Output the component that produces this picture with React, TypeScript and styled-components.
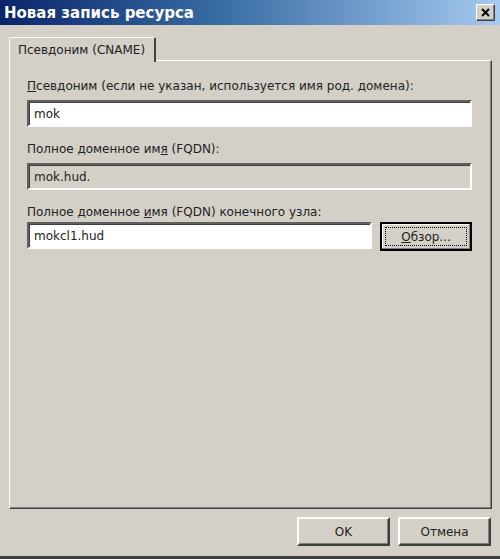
import React from "react";
import styled, { createGlobalStyle } from "styled-components";

const Global = createGlobalStyle`
  html, body { margin: 0; padding: 0; background: #d4d0c8; }
  body { font-family: "DejaVu Sans", "Liberation Sans", sans-serif; font-size: 12px; color: #000; }
`;

const Window = styled.div`
  width: 500px;
  height: 559px;
  box-sizing: border-box;
  background: #d4d0c8;
  display: flex;
  flex-direction: column;
  border-bottom: 3px solid #404040;
`;

const TitleBar = styled.div`
  height: 25px;
  flex: none;
  display: flex;
  align-items: center;
  justify-content: space-between;
  padding: 0 5px 0 4px;
  background: linear-gradient(to right, #0a246a 0%, #3a6ea5 45%, #a6caf0 100%);
`;

const Title = styled.span`
  color: #fff;
  font-weight: bold;
  font-size: 15px;
`;

const CloseButton = styled.div`
  width: 19px;
  height: 17px;
  box-sizing: border-box;
  background: #d4d0c8;
  border: 1px solid;
  border-color: #fff #404040 #404040 #fff;
  box-shadow: inset -1px -1px 0 #808080;
  display: flex;
  align-items: center;
  justify-content: center;
`;

const Body = styled.div`
  flex: 1;
  display: flex;
  flex-direction: column;
  padding: 12px 8px 0 9px;
  min-height: 0;
`;

const TabStrip = styled.div`
  display: flex;
  height: 23px;
  flex: none;
  position: relative;
  z-index: 1;
`;

const Tab = styled.div`
  box-sizing: border-box;
  width: 147px;
  height: 25px;
  padding: 0 0 0 8px;
  display: flex;
  align-items: center;
  background: #d4d0c8;
  border-top: 1px solid #fff;
  border-left: 1px solid #fff;
  border-right: 2px solid #404040;
  border-top-left-radius: 2px;
  border-top-right-radius: 2px;
  color: #222;
`;

const Panel = styled.div`
  flex: 1;
  box-sizing: border-box;
  border-top: 1px solid #fff;
  border-left: 1px solid #fff;
  border-right: 1px solid #404040;
  border-bottom: 1px solid #404040;
  box-shadow: inset -1px -1px 0 #808080;
  padding: 18px 19px 0 17px;
  display: flex;
  flex-direction: column;
`;

const Label = styled.div<{ $first?: boolean; $tight?: boolean }>`
  line-height: 14px;
  margin-top: ${(p) => (p.$first ? "0" : "15px")};
  margin-bottom: ${(p) => (p.$tight ? "3px" : "7px")};
  color: #222;
`;

const Key = styled.span`
  text-decoration: underline;
`;

const Input = styled.div<{ $disabled?: boolean; $width?: number }>`
  box-sizing: border-box;
  height: 27px;
  width: ${(p) => (p.$width ? `${p.$width}px` : "100%")};
  background: ${(p) => (p.$disabled ? "#d4d0c8" : "#fff")};
  border: 2px solid;
  border-color: #606060 #fff #fff #606060;
  box-shadow: inset 1px 1px 0 #404040, 1px 1px 0 #d4d0c8;
  display: flex;
  align-items: center;
  padding-left: 5px;
  color: #222;
`;

const Row = styled.div`
  display: flex;
  align-items: flex-start;
  gap: 8px;
`;

const Button = styled.div<{ $default?: boolean; $width?: number }>`
  box-sizing: border-box;
  width: ${(p) => p.$width ?? 93}px;
  height: 29px;
  background: #d4d0c8;
  display: flex;
  align-items: center;
  justify-content: center;
  position: relative;
  color: #222;
  border: 2px solid;
  border-color: ${(p) => (p.$default ? "#000" : "#fff #404040 #404040 #fff")};
  box-shadow: ${(p) =>
    p.$default ? "inset -1px -1px 0 #808080, inset 1px 1px 0 #fff" : "inset -1px -1px 0 #808080"};
`;

const Focus = styled.span`
  position: absolute;
  inset: 3px;
  border: 1px dotted #000;
`;

const Footer = styled.div`
  display: flex;
  justify-content: flex-end;
  gap: 8px;
  padding: 8px 9px 0 0;
  height: 47px;
  box-sizing: border-box;
  flex: none;
`;

export default function App() {
  return (
    <>
      <Global />
      <Window>
        <TitleBar>
          <Title>Новая запись ресурса</Title>
          <CloseButton>
            <svg width="10" height="9" viewBox="0 0 10 9">
              <path d="M1 1 L8 8 M8 1 L1 8" stroke="#000" strokeWidth="2" />
            </svg>
          </CloseButton>
        </TitleBar>
        <Body>
          <TabStrip>
            <Tab>Псевдоним (CNAME)</Tab>
          </TabStrip>
          <Panel>
            <Label $first>
              <Key>П</Key>севдоним (если не указан, используется имя род. домена):
            </Label>
            <Input>mok</Input>
            <Label>
              Полное доменное им<Key>я</Key> (FQDN):
            </Label>
            <Input $disabled>mok.hud.</Input>
            <Label $tight>
              Полное доменное <Key>и</Key>мя (FQDN) конечного узла:
            </Label>
            <Row>
              <Input $width={345}>mokcl1.hud</Input>
              <Button $default $width={92}>
                <Focus />
                <span>
                  <Key>О</Key>бзор...
                </span>
              </Button>
            </Row>
          </Panel>
        </Body>
        <Footer>
          <Button>OK</Button>
          <Button>Отмена</Button>
        </Footer>
      </Window>
    </>
  );
}
